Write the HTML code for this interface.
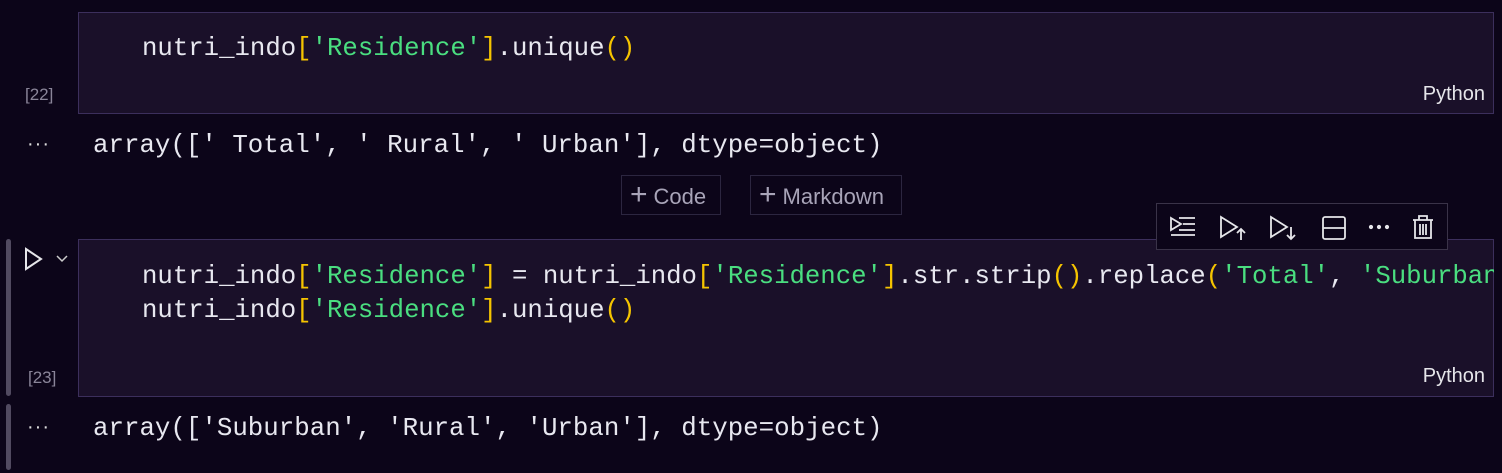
<!DOCTYPE html>
<html><head><style>
body{margin:0;width:1502px;height:473px;background:#0c0519;position:relative;overflow:hidden;font-family:"Liberation Sans",sans-serif}
.a{position:absolute}
.cell{position:absolute;left:78px;width:1416px;background:#1a1029;border:1px solid #3c2f5c;box-sizing:border-box}
.code{position:absolute;font-family:"Liberation Mono",monospace;font-size:25.7px;color:#e8e8f0;white-space:pre;line-height:34px}
.s{color:#4ade80}.b{color:#f5c400}
.cnt{position:absolute;font-family:"Liberation Sans",sans-serif;font-size:17px;color:#8a8599}
.py{position:absolute;right:8px;font-size:20px;color:#e6e6ea}
.out{position:absolute;left:93px;font-family:"Liberation Mono",monospace;font-size:25.8px;color:#e8e8f0;white-space:pre}
.dots{position:absolute;left:27px;color:#ddd;font-size:20px;letter-spacing:1px}
.btn{position:absolute;top:175px;height:40px;border:1px solid #2c2640;box-sizing:border-box;color:#a8a4b8;font-size:22px;line-height:38px;padding-left:8px}
.bar{position:absolute;left:6px;width:5px;background:#514a60;border-radius:3px}
</style></head><body>
<div class="cell" style="top:12px;height:102px">
  <div class="code" style="left:63px;top:19px">nutri_indo<span class="b">[</span><span class="s">'Residence'</span><span class="b">]</span>.unique<span class="b">()</span></div>
  <div class="py" style="top:70px">Python</div>
</div>
<div class="cnt" style="left:25px;top:85px">[22]</div>
<div class="dots" style="top:133px">···</div>
<div class="out" style="top:131px">array([' Total', ' Rural', ' Urban'], dtype=object)</div>
<div class="btn" style="left:621px;width:100px"><span style="font-size:30px;font-weight:100;margin-right:6px">+</span>Code</div>
<div class="btn" style="left:750px;width:152px"><span style="font-size:30px;font-weight:100;margin-right:6px">+</span>Markdown</div>

<div class="bar" style="top:239px;height:157px"></div>
<div class="bar" style="top:404px;height:66px"></div>
<svg class="a" style="left:22px;top:246px" width="55" height="28" viewBox="0 0 55 28"><path d="M4 3 L19 13 L4 23 Z" fill="none" stroke="#e6e6ea" stroke-width="2"/><path d="M35 10 L40 15 L45 10" fill="none" stroke="#ccc" stroke-width="1.5"/></svg>
<div class="cell" style="top:239px;height:158px">
  <div class="code" style="left:63px;top:20px">nutri_indo<span class="b">[</span><span class="s">'Residence'</span><span class="b">]</span> = nutri_indo<span class="b">[</span><span class="s">'Residence'</span><span class="b">]</span>.str.strip<span class="b">()</span>.replace<span class="b">(</span><span class="s">'Total'</span>, <span class="s">'Suburban'</span>
nutri_indo<span class="b">[</span><span class="s">'Residence'</span><span class="b">]</span>.unique<span class="b">()</span></div>
  <div class="py" style="top:125px">Python</div>
</div>
<div class="a" style="left:1494px;top:239px;width:8px;height:158px;background:#0c0519"></div>
<div class="cnt" style="left:28px;top:368px">[23]</div>
<div class="a" style="left:1156px;top:203px;width:292px;height:47px;background:#0c0519;border:1px solid #3a3348;box-sizing:border-box">
<svg width="290" height="45" viewBox="0 0 290 45" fill="none" stroke="#e6e6ea" stroke-width="1.8">
<path d="M14 14 L24 20 L14 26 Z"/><path d="M22 14 H38 M26 20 H38 M22 26 H38 M14 31 H38"/>
<path d="M64 13 L80 23 L64 33 Z"/><path d="M84 36 V25 M80 29 L84 25 L88 29"/>
<path d="M114 13 L130 23 L114 33 Z"/><path d="M134 23 V35 M130 31 L134 35 L138 31"/>
<rect x="166" y="13" width="22" height="22" rx="2"/><path d="M166 24 H188"/>
<circle cx="214" cy="23" r="1.2" fill="#e6e6ea"/><circle cx="222" cy="23" r="1.2" fill="#e6e6ea"/><circle cx="230" cy="23" r="1.2" fill="#e6e6ea"/>
<path d="M256 16 H276 M262 16 V12 H270 V16 M258 16 V34 H274 V16 M263 20 V31 M266 20 V31 M269 20 V31"/>
</svg></div>
<div class="dots" style="top:416px">···</div>
<div class="out" style="top:414px">array(['Suburban', 'Rural', 'Urban'], dtype=object)</div>
</body></html>
